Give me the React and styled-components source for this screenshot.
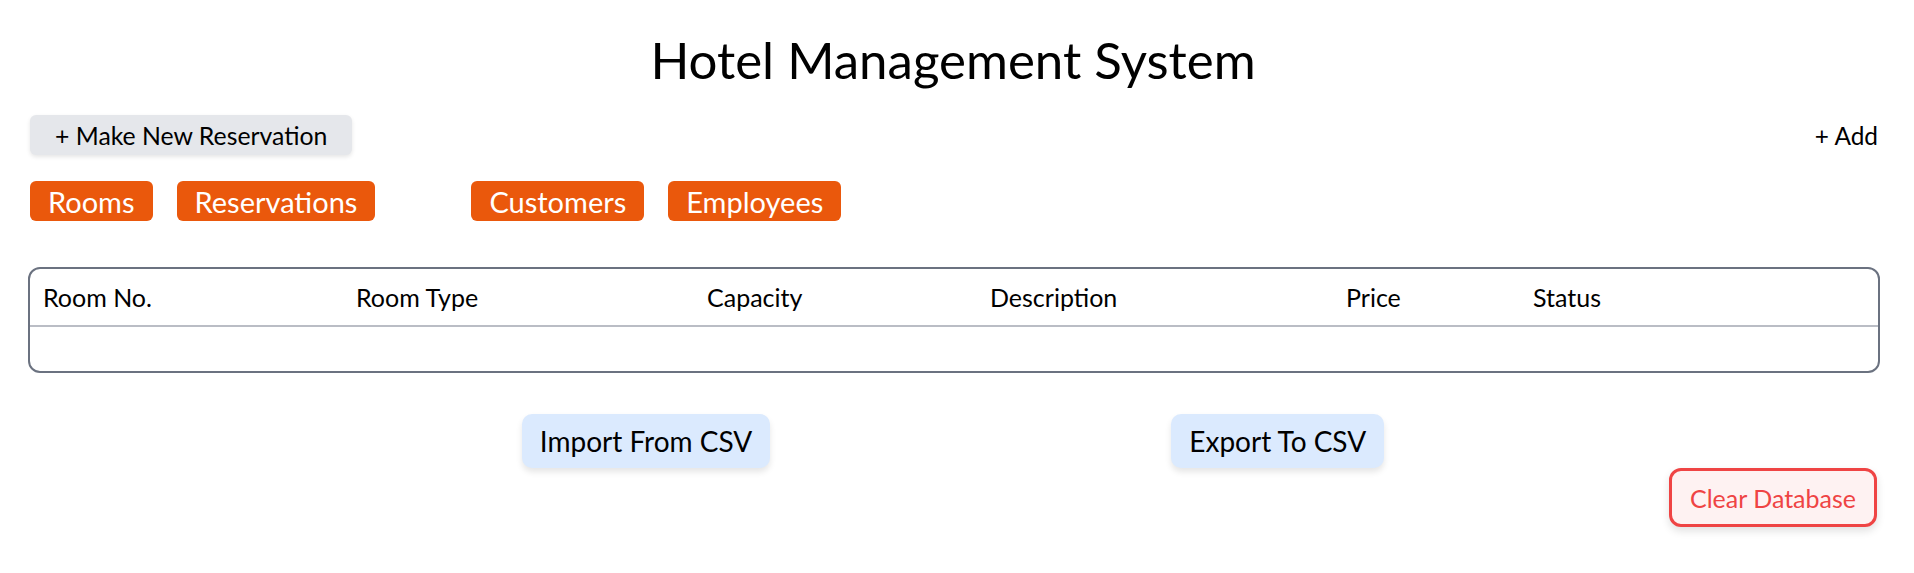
import React from "react";
import styled, { createGlobalStyle } from "styled-components";

const GlobalStyle = createGlobalStyle`
  body {
    margin: 0;
    background: #ffffff;
    font-family: Lato, "Liberation Sans", sans-serif;
    color: #000000;
  }
`;

const Page = styled.div`
  padding: 30px 36px 40px 28px;
`;

const Title = styled.h1`
  margin: 0;
  text-align: center;
  font-size: 51px;
  font-weight: 400;
  line-height: 60px;
`;

const ActionRow = styled.div`
  display: flex;
  justify-content: space-between;
  align-items: center;
  margin-top: 25px;
  padding-left: 2px;
`;

const NewReservationButton = styled.button`
  height: 40px;
  padding: 0 25px;
  border: none;
  border-radius: 6px;
  background: #e5e7eb;
  box-shadow: 0 2px 4px rgba(0, 0, 0, 0.1);
  font-family: inherit;
  font-size: 24.8px;
  color: #000;
`;

const AddLink = styled.button`
  padding: 0;
  border: none;
  background: none;
  font-family: inherit;
  font-size: 24.4px;
  color: #000;
`;

const TabRow = styled.div`
  display: flex;
  gap: 24px;
  margin-top: 26px;
  padding-left: 2px;
`;

const TabButton = styled.button`
  height: 40px;
  padding: 0 18px;
  margin-left: ${({ $offset }) => $offset || 0}px;
  border: none;
  border-radius: 6px;
  background: #ea580c;
  color: #ffffff;
  font-family: inherit;
  font-size: 29px;
`;

const Table = styled.div`
  margin-top: 46px;
  margin-right: -2px;
  border: 2px solid #6b7280;
  border-radius: 12px;
  overflow: hidden;
`;

const HeaderRow = styled.div`
  display: grid;
  grid-template-columns: 313px 351px 283px 356px 187px 1fr;
  align-items: center;
  height: 56px;
  border-bottom: 2px solid #babdc5;
`;

const HeaderCell = styled.div`
  padding-left: 13px;
  font-size: 25px;
`;

const TableBody = styled.div`
  height: 44px;
`;

const CsvRow = styled.div`
  display: flex;
  justify-content: center;
  gap: 401px;
  margin-top: 41px;
`;

const CsvButton = styled.button`
  height: 54px;
  padding: 0 18px;
  border: none;
  border-radius: 10px;
  background: #dbeafe;
  box-shadow: 0 4px 6px rgba(0, 0, 0, 0.1);
  font-family: inherit;
  font-size: 28px;
  color: #000;
`;

const FooterRow = styled.div`
  display: flex;
  justify-content: flex-end;
  padding-right: 1px;
`;

const ClearButton = styled.button`
  height: 59px;
  padding: 0 18px;
  border: 3px solid #ef4444;
  border-radius: 12px;
  background: #fef2f2;
  color: #ef4444;
  box-shadow: 0 4px 8px rgba(0, 0, 0, 0.12);
  font-family: inherit;
  font-size: 25px;
`;

const columns = ["Room No.", "Room Type", "Capacity", "Description", "Price", "Status"];

const App = () => {
  return (
    <Page>
      <GlobalStyle />
      <Title>Hotel Management System</Title>
      <ActionRow>
        <NewReservationButton>+ Make New Reservation</NewReservationButton>
        <AddLink>+ Add</AddLink>
      </ActionRow>
      <TabRow>
        <TabButton>Rooms</TabButton>
        <TabButton>Reservations</TabButton>
        <TabButton $offset={72}>Customers</TabButton>
        <TabButton>Employees</TabButton>
      </TabRow>
      <Table>
        <HeaderRow>
          {columns.map((c) => (
            <HeaderCell key={c}>{c}</HeaderCell>
          ))}
        </HeaderRow>
        <TableBody />
      </Table>
      <CsvRow>
        <CsvButton>Import From CSV</CsvButton>
        <CsvButton>Export To CSV</CsvButton>
      </CsvRow>
      <FooterRow>
        <ClearButton>Clear Database</ClearButton>
      </FooterRow>
    </Page>
  );
};

export default App;
